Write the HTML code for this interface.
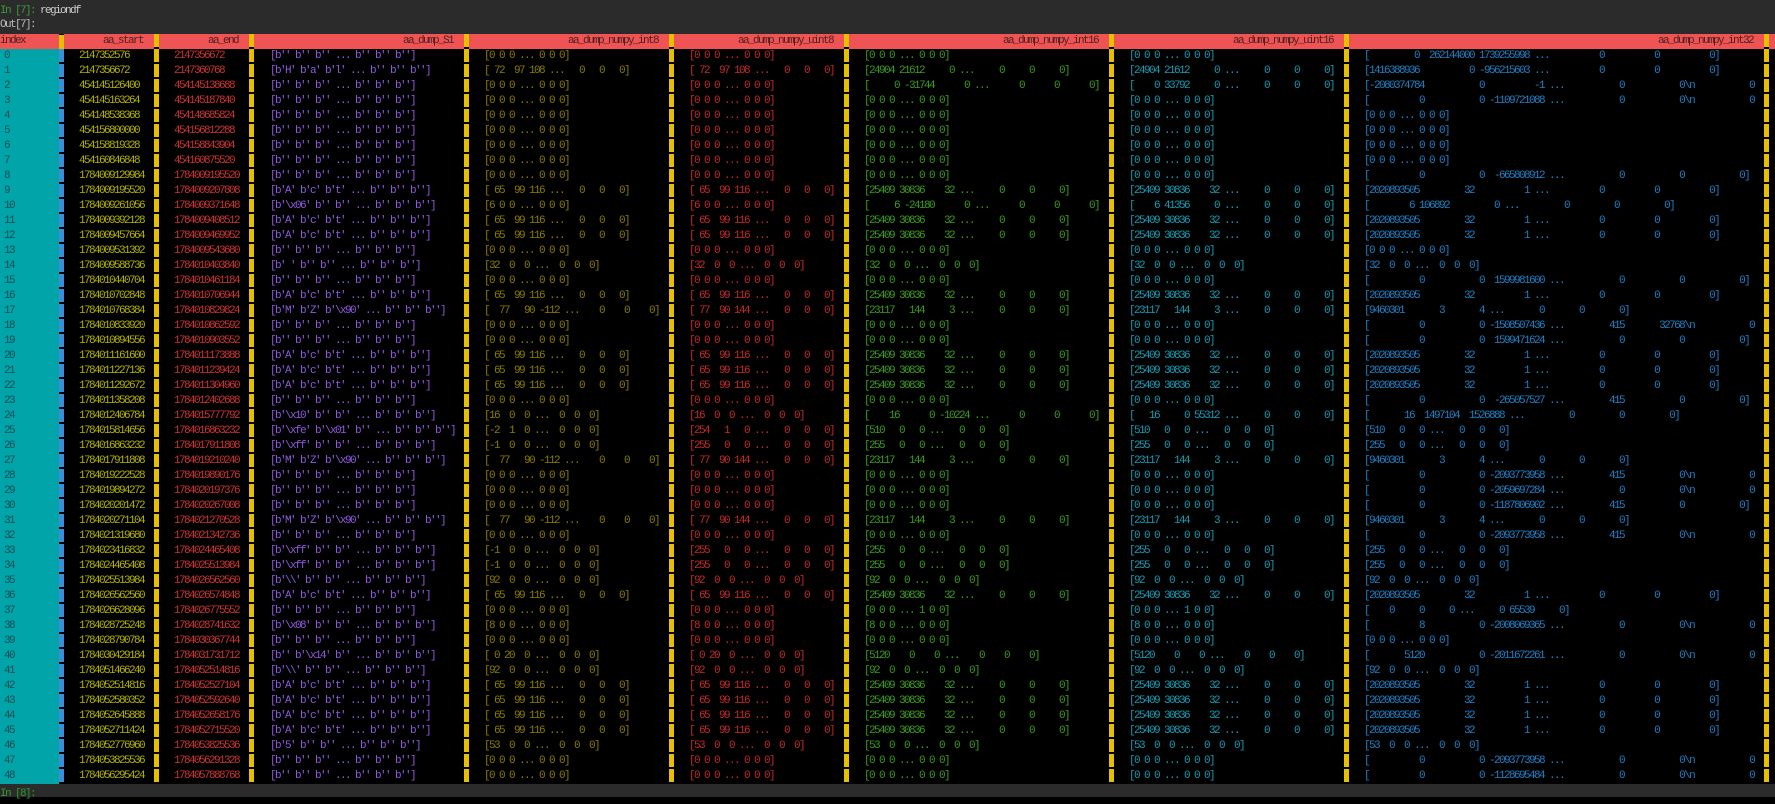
<!DOCTYPE html>
<html><head><meta charset="utf-8"><style>
html,body{margin:0;padding:0;background:#000;width:1775px;height:797px;overflow:hidden;font-family:"Liberation Mono",monospace;font-size:11px;letter-spacing:-1.6px}
.top{position:absolute;left:0;top:0;width:1775px;height:34px;background:#2b2b2b}
.bot{position:absolute;left:0;top:784px;width:1775px;height:13px;background:#2b2b2b;color:#2f9a2f;line-height:20px;padding-left:0}
.t1{position:absolute;left:0;top:5px;color:#3c9a3c}
.t1 b{font-weight:normal;color:#ccc}
.t2{position:absolute;left:0;top:19px;color:#bbb}
.hdr{position:absolute;left:0;top:34px;height:15px;width:1775px;background:#f05353;color:#4a2222;line-height:15px}
.hdr span{position:absolute;text-align:right;white-space:pre}
.idx{position:absolute;left:0;top:49px;width:59px;height:735px;background:#00a4a9}
.mk{position:absolute;top:34px;width:5px;height:750px;background:repeating-linear-gradient(to bottom,#e6c000 0 1px,#e6c000 1px 13px,#000 13px 15px)}
.mk.bl{top:49px;height:735px;background:repeating-linear-gradient(to bottom,#3a8fd8 0 13px,#000 13px 15px)}
.mk.h{top:34px;height:15px;background:#e6c000;border-top:1px solid #000;box-sizing:border-box}
.rows{position:absolute;left:0;top:49px;width:1775px}
.r{position:relative;height:15px;line-height:15px}
.r span{position:absolute;top:0;white-space:pre}
.r span:nth-child(1){left:4px;color:#0c4e52}
.r span:nth-child(2){left:79px;color:#b3b300}
.r span:nth-child(3){left:174px;color:#cc3434}
.r span:nth-child(4){left:270px;color:#8f5ae0}
.r span:nth-child(5){left:484px;color:#8a7c00}
.r span:nth-child(6){left:689px;color:#c42a2a}
.r span:nth-child(7){left:864px;color:#3c9c1c}
.r span:nth-child(8){left:1129px;color:#179cb4}
.r span:nth-child(9){left:1364px;color:#1f80c4}
</style></head><body>
<div class="top"><div class="t1">In [7]: <b>regiondf</b></div><div class="t2">Out[7]:</div></div>
<div class="hdr">
<span style="left:0">index</span>
<span style="right:1632px">aa_start</span>
<span style="right:1537px">aa_end</span>
<span style="right:1322px">aa_dump_S1</span>
<span style="right:1117px">aa_dump_numpy_int8</span>
<span style="right:942px">aa_dump_numpy_uint8</span>
<span style="right:677px">aa_dump_numpy_int16</span>
<span style="right:442px">aa_dump_numpy_uint16</span>
<span style="right:22px">aa_dump_numpy_int32</span>
</div>
<div class="idx"></div>
<div class="mk h" style="left:59px"></div>
<div class="mk bl" style="left:59px"></div>
<div class="mk" style="left:154px"></div>
<div class="mk" style="left:249px"></div>
<div class="mk" style="left:464px"></div>
<div class="mk" style="left:669px"></div>
<div class="mk" style="left:844px"></div>
<div class="mk" style="left:1109px"></div>
<div class="mk" style="left:1344px"></div>
<div class="mk" style="left:1764px"></div>
<div class="rows">
<div class="r"><span>0</span><span>2147352576</span><span>2147356672</span><span>[b'' b'' b'' ... b'' b'' b'']</span><span>[0 0 0 ... 0 0 0]</span><span>[0 0 0 ... 0 0 0]</span><span>[0 0 0 ... 0 0 0]</span><span>[0 0 0 ... 0 0 0]</span><span>[         0  262144000 1739255998 ...          0          0          0]</span></div>
<div class="r"><span>1</span><span>2147356672</span><span>2147360768</span><span>[b'H' b'a' b'l' ... b'' b'' b'']</span><span>[ 72  97 108 ...   0   0   0]</span><span>[ 72  97 108 ...   0   0   0]</span><span>[24904 21612     0 ...     0     0     0]</span><span>[24904 21612     0 ...     0     0     0]</span><span>[1416388936          0 -956215603 ...          0          0          0]</span></div>
<div class="r"><span>2</span><span>454145126400</span><span>454145138688</span><span>[b'' b'' b'' ... b'' b'' b'']</span><span>[0 0 0 ... 0 0 0]</span><span>[0 0 0 ... 0 0 0]</span><span>[     0 -31744      0 ...      0      0      0]</span><span>[    0 33792     0 ...     0     0     0]</span><span>[-2080374784           0          -1 ...           0           0\n           0</span></div>
<div class="r"><span>3</span><span>454145163264</span><span>454145187840</span><span>[b'' b'' b'' ... b'' b'' b'']</span><span>[0 0 0 ... 0 0 0]</span><span>[0 0 0 ... 0 0 0]</span><span>[0 0 0 ... 0 0 0]</span><span>[0 0 0 ... 0 0 0]</span><span>[          0           0 -1109721088 ...           0           0\n           0</span></div>
<div class="r"><span>4</span><span>454148538368</span><span>454148685824</span><span>[b'' b'' b'' ... b'' b'' b'']</span><span>[0 0 0 ... 0 0 0]</span><span>[0 0 0 ... 0 0 0]</span><span>[0 0 0 ... 0 0 0]</span><span>[0 0 0 ... 0 0 0]</span><span>[0 0 0 ... 0 0 0]</span></div>
<div class="r"><span>5</span><span>454156800000</span><span>454156812288</span><span>[b'' b'' b'' ... b'' b'' b'']</span><span>[0 0 0 ... 0 0 0]</span><span>[0 0 0 ... 0 0 0]</span><span>[0 0 0 ... 0 0 0]</span><span>[0 0 0 ... 0 0 0]</span><span>[0 0 0 ... 0 0 0]</span></div>
<div class="r"><span>6</span><span>454158819328</span><span>454158843904</span><span>[b'' b'' b'' ... b'' b'' b'']</span><span>[0 0 0 ... 0 0 0]</span><span>[0 0 0 ... 0 0 0]</span><span>[0 0 0 ... 0 0 0]</span><span>[0 0 0 ... 0 0 0]</span><span>[0 0 0 ... 0 0 0]</span></div>
<div class="r"><span>7</span><span>454160846848</span><span>454160875520</span><span>[b'' b'' b'' ... b'' b'' b'']</span><span>[0 0 0 ... 0 0 0]</span><span>[0 0 0 ... 0 0 0]</span><span>[0 0 0 ... 0 0 0]</span><span>[0 0 0 ... 0 0 0]</span><span>[0 0 0 ... 0 0 0]</span></div>
<div class="r"><span>8</span><span>1784009129984</span><span>1784009195520</span><span>[b'' b'' b'' ... b'' b'' b'']</span><span>[0 0 0 ... 0 0 0]</span><span>[0 0 0 ... 0 0 0]</span><span>[0 0 0 ... 0 0 0]</span><span>[0 0 0 ... 0 0 0]</span><span>[          0           0  -665808912 ...           0           0           0]</span></div>
<div class="r"><span>9</span><span>1784009195520</span><span>1784009207808</span><span>[b'A' b'c' b't' ... b'' b'' b'']</span><span>[ 65  99 116 ...   0   0   0]</span><span>[ 65  99 116 ...   0   0   0]</span><span>[25409 30836    32 ...     0     0     0]</span><span>[25409 30836    32 ...     0     0     0]</span><span>[2020893505         32          1 ...          0          0          0]</span></div>
<div class="r"><span>10</span><span>1784009261056</span><span>1784009371648</span><span>[b'\x06' b'' b'' ... b'' b'' b'']</span><span>[6 0 0 ... 0 0 0]</span><span>[6 0 0 ... 0 0 0]</span><span>[     6 -24180      0 ...      0      0      0]</span><span>[    6 41356     0 ...     0     0     0]</span><span>[        6 106892         0 ...         0         0         0]</span></div>
<div class="r"><span>11</span><span>1784009392128</span><span>1784009408512</span><span>[b'A' b'c' b't' ... b'' b'' b'']</span><span>[ 65  99 116 ...   0   0   0]</span><span>[ 65  99 116 ...   0   0   0]</span><span>[25409 30836    32 ...     0     0     0]</span><span>[25409 30836    32 ...     0     0     0]</span><span>[2020893505         32          1 ...          0          0          0]</span></div>
<div class="r"><span>12</span><span>1784009457664</span><span>1784009469952</span><span>[b'A' b'c' b't' ... b'' b'' b'']</span><span>[ 65  99 116 ...   0   0   0]</span><span>[ 65  99 116 ...   0   0   0]</span><span>[25409 30836    32 ...     0     0     0]</span><span>[25409 30836    32 ...     0     0     0]</span><span>[2020893505         32          1 ...          0          0          0]</span></div>
<div class="r"><span>13</span><span>1784009531392</span><span>1784009543680</span><span>[b'' b'' b'' ... b'' b'' b'']</span><span>[0 0 0 ... 0 0 0]</span><span>[0 0 0 ... 0 0 0]</span><span>[0 0 0 ... 0 0 0]</span><span>[0 0 0 ... 0 0 0]</span><span>[0 0 0 ... 0 0 0]</span></div>
<div class="r"><span>14</span><span>1784009588736</span><span>1784010403840</span><span>[b' ' b'' b'' ... b'' b'' b'']</span><span>[32  0  0 ...  0  0  0]</span><span>[32  0  0 ...  0  0  0]</span><span>[32  0  0 ...  0  0  0]</span><span>[32  0  0 ...  0  0  0]</span><span>[32  0  0 ...  0  0  0]</span></div>
<div class="r"><span>15</span><span>1784010440704</span><span>1784010461184</span><span>[b'' b'' b'' ... b'' b'' b'']</span><span>[0 0 0 ... 0 0 0]</span><span>[0 0 0 ... 0 0 0]</span><span>[0 0 0 ... 0 0 0]</span><span>[0 0 0 ... 0 0 0]</span><span>[          0           0  1599981600 ...           0           0           0]</span></div>
<div class="r"><span>16</span><span>1784010702848</span><span>1784010706944</span><span>[b'A' b'c' b't' ... b'' b'' b'']</span><span>[ 65  99 116 ...   0   0   0]</span><span>[ 65  99 116 ...   0   0   0]</span><span>[25409 30836    32 ...     0     0     0]</span><span>[25409 30836    32 ...     0     0     0]</span><span>[2020893505         32          1 ...          0          0          0]</span></div>
<div class="r"><span>17</span><span>1784010768384</span><span>1784010829824</span><span>[b'M' b'Z' b'\x90' ... b'' b'' b'']</span><span>[  77   90 -112 ...    0    0    0]</span><span>[ 77  90 144 ...   0   0   0]</span><span>[23117   144     3 ...     0     0     0]</span><span>[23117   144     3 ...     0     0     0]</span><span>[9460301       3       4 ...       0       0       0]</span></div>
<div class="r"><span>18</span><span>1784010833920</span><span>1784010862592</span><span>[b'' b'' b'' ... b'' b'' b'']</span><span>[0 0 0 ... 0 0 0]</span><span>[0 0 0 ... 0 0 0]</span><span>[0 0 0 ... 0 0 0]</span><span>[0 0 0 ... 0 0 0]</span><span>[          0           0 -1508507436 ...         415       32768\n           0</span></div>
<div class="r"><span>19</span><span>1784010894556</span><span>1784010903552</span><span>[b'' b'' b'' ... b'' b'' b'']</span><span>[0 0 0 ... 0 0 0]</span><span>[0 0 0 ... 0 0 0]</span><span>[0 0 0 ... 0 0 0]</span><span>[0 0 0 ... 0 0 0]</span><span>[          0           0  1599471624 ...           0           0           0]</span></div>
<div class="r"><span>20</span><span>1784011161600</span><span>1784011173888</span><span>[b'A' b'c' b't' ... b'' b'' b'']</span><span>[ 65  99 116 ...   0   0   0]</span><span>[ 65  99 116 ...   0   0   0]</span><span>[25409 30836    32 ...     0     0     0]</span><span>[25409 30836    32 ...     0     0     0]</span><span>[2020893505         32          1 ...          0          0          0]</span></div>
<div class="r"><span>21</span><span>1784011227136</span><span>1784011239424</span><span>[b'A' b'c' b't' ... b'' b'' b'']</span><span>[ 65  99 116 ...   0   0   0]</span><span>[ 65  99 116 ...   0   0   0]</span><span>[25409 30836    32 ...     0     0     0]</span><span>[25409 30836    32 ...     0     0     0]</span><span>[2020893505         32          1 ...          0          0          0]</span></div>
<div class="r"><span>22</span><span>1784011292672</span><span>1784011304960</span><span>[b'A' b'c' b't' ... b'' b'' b'']</span><span>[ 65  99 116 ...   0   0   0]</span><span>[ 65  99 116 ...   0   0   0]</span><span>[25409 30836    32 ...     0     0     0]</span><span>[25409 30836    32 ...     0     0     0]</span><span>[2020893505         32          1 ...          0          0          0]</span></div>
<div class="r"><span>23</span><span>1784011358208</span><span>1784012402688</span><span>[b'' b'' b'' ... b'' b'' b'']</span><span>[0 0 0 ... 0 0 0]</span><span>[0 0 0 ... 0 0 0]</span><span>[0 0 0 ... 0 0 0]</span><span>[0 0 0 ... 0 0 0]</span><span>[          0           0  -265057527 ...         415           0           0]</span></div>
<div class="r"><span>24</span><span>1784012406784</span><span>1784015777792</span><span>[b'\x10' b'' b'' ... b'' b'' b'']</span><span>[16  0  0 ...  0  0  0]</span><span>[16  0  0 ...  0  0  0]</span><span>[    16      0 -10224 ...      0      0      0]</span><span>[   16     0 55312 ...     0     0     0]</span><span>[       16  1497104  1526888 ...         0         0         0]</span></div>
<div class="r"><span>25</span><span>1784015814656</span><span>1784016863232</span><span>[b'\xfe' b'\x01' b'' ... b'' b'' b'']</span><span>[-2  1  0 ...  0  0  0]</span><span>[254   1   0 ...   0   0   0]</span><span>[510   0   0 ...   0   0   0]</span><span>[510   0   0 ...   0   0   0]</span><span>[510   0   0 ...   0   0   0]</span></div>
<div class="r"><span>26</span><span>1784016863232</span><span>1784017911808</span><span>[b'\xff' b'' b'' ... b'' b'' b'']</span><span>[-1  0  0 ...  0  0  0]</span><span>[255   0   0 ...   0   0   0]</span><span>[255   0   0 ...   0   0   0]</span><span>[255   0   0 ...   0   0   0]</span><span>[255   0   0 ...   0   0   0]</span></div>
<div class="r"><span>27</span><span>1784017911808</span><span>1784019210240</span><span>[b'M' b'Z' b'\x90' ... b'' b'' b'']</span><span>[  77   90 -112 ...    0    0    0]</span><span>[ 77  90 144 ...   0   0   0]</span><span>[23117   144     3 ...     0     0     0]</span><span>[23117   144     3 ...     0     0     0]</span><span>[9460301       3       4 ...       0       0       0]</span></div>
<div class="r"><span>28</span><span>1784019222528</span><span>1784019890176</span><span>[b'' b'' b'' ... b'' b'' b'']</span><span>[0 0 0 ... 0 0 0]</span><span>[0 0 0 ... 0 0 0]</span><span>[0 0 0 ... 0 0 0]</span><span>[0 0 0 ... 0 0 0]</span><span>[          0           0 -2093773958 ...         415           0\n           0</span></div>
<div class="r"><span>29</span><span>1784019894272</span><span>1784020197376</span><span>[b'' b'' b'' ... b'' b'' b'']</span><span>[0 0 0 ... 0 0 0]</span><span>[0 0 0 ... 0 0 0]</span><span>[0 0 0 ... 0 0 0]</span><span>[0 0 0 ... 0 0 0]</span><span>[          0           0 -2059697284 ...           0           0\n           0</span></div>
<div class="r"><span>30</span><span>1784020201472</span><span>1784020267008</span><span>[b'' b'' b'' ... b'' b'' b'']</span><span>[0 0 0 ... 0 0 0]</span><span>[0 0 0 ... 0 0 0]</span><span>[0 0 0 ... 0 0 0]</span><span>[0 0 0 ... 0 0 0]</span><span>[          0           0 -1187806902 ...         415           0           0]</span></div>
<div class="r"><span>31</span><span>1784020271104</span><span>1784021270528</span><span>[b'M' b'Z' b'\x90' ... b'' b'' b'']</span><span>[  77   90 -112 ...    0    0    0]</span><span>[ 77  90 144 ...   0   0   0]</span><span>[23117   144     3 ...     0     0     0]</span><span>[23117   144     3 ...     0     0     0]</span><span>[9460301       3       4 ...       0       0       0]</span></div>
<div class="r"><span>32</span><span>1784021319680</span><span>1784021342736</span><span>[b'' b'' b'' ... b'' b'' b'']</span><span>[0 0 0 ... 0 0 0]</span><span>[0 0 0 ... 0 0 0]</span><span>[0 0 0 ... 0 0 0]</span><span>[0 0 0 ... 0 0 0]</span><span>[          0           0 -2093773958 ...         415           0\n           0</span></div>
<div class="r"><span>33</span><span>1784023416832</span><span>1784024465408</span><span>[b'\xff' b'' b'' ... b'' b'' b'']</span><span>[-1  0  0 ...  0  0  0]</span><span>[255   0   0 ...   0   0   0]</span><span>[255   0   0 ...   0   0   0]</span><span>[255   0   0 ...   0   0   0]</span><span>[255   0   0 ...   0   0   0]</span></div>
<div class="r"><span>34</span><span>1784024465408</span><span>1784025513984</span><span>[b'\xff' b'' b'' ... b'' b'' b'']</span><span>[-1  0  0 ...  0  0  0]</span><span>[255   0   0 ...   0   0   0]</span><span>[255   0   0 ...   0   0   0]</span><span>[255   0   0 ...   0   0   0]</span><span>[255   0   0 ...   0   0   0]</span></div>
<div class="r"><span>35</span><span>1784025513984</span><span>1784026562560</span><span>[b'\\' b'' b'' ... b'' b'' b'']</span><span>[92  0  0 ...  0  0  0]</span><span>[92  0  0 ...  0  0  0]</span><span>[92  0  0 ...  0  0  0]</span><span>[92  0  0 ...  0  0  0]</span><span>[92  0  0 ...  0  0  0]</span></div>
<div class="r"><span>36</span><span>1784026562560</span><span>1784026574848</span><span>[b'A' b'c' b't' ... b'' b'' b'']</span><span>[ 65  99 116 ...   0   0   0]</span><span>[ 65  99 116 ...   0   0   0]</span><span>[25409 30836    32 ...     0     0     0]</span><span>[25409 30836    32 ...     0     0     0]</span><span>[2020893505         32          1 ...          0          0          0]</span></div>
<div class="r"><span>37</span><span>1784026628096</span><span>1784026775552</span><span>[b'' b'' b'' ... b'' b'' b'']</span><span>[0 0 0 ... 0 0 0]</span><span>[0 0 0 ... 0 0 0]</span><span>[0 0 0 ... 1 0 0]</span><span>[0 0 0 ... 1 0 0]</span><span>[    0     0     0 ...     0 65539     0]</span></div>
<div class="r"><span>38</span><span>1784028725248</span><span>1784028741632</span><span>[b'\x08' b'' b'' ... b'' b'' b'']</span><span>[8 0 0 ... 0 0 0]</span><span>[8 0 0 ... 0 0 0]</span><span>[8 0 0 ... 0 0 0]</span><span>[8 0 0 ... 0 0 0]</span><span>[          8           0 -2008069365 ...           0           0\n           0</span></div>
<div class="r"><span>39</span><span>1784028790784</span><span>1784030367744</span><span>[b'' b'' b'' ... b'' b'' b'']</span><span>[0 0 0 ... 0 0 0]</span><span>[0 0 0 ... 0 0 0]</span><span>[0 0 0 ... 0 0 0]</span><span>[0 0 0 ... 0 0 0]</span><span>[0 0 0 ... 0 0 0]</span></div>
<div class="r"><span>40</span><span>1784030429184</span><span>1784031731712</span><span>[b'' b'\x14' b'' ... b'' b'' b'']</span><span>[ 0 20  0 ...  0  0  0]</span><span>[ 0 20  0 ...  0  0  0]</span><span>[5120    0    0 ...    0    0    0]</span><span>[5120    0    0 ...    0    0    0]</span><span>[       5120           0 -2011672261 ...           0           0\n           0</span></div>
<div class="r"><span>41</span><span>1784051466240</span><span>1784052514816</span><span>[b'\\' b'' b'' ... b'' b'' b'']</span><span>[92  0  0 ...  0  0  0]</span><span>[92  0  0 ...  0  0  0]</span><span>[92  0  0 ...  0  0  0]</span><span>[92  0  0 ...  0  0  0]</span><span>[92  0  0 ...  0  0  0]</span></div>
<div class="r"><span>42</span><span>1784052514816</span><span>1784052527104</span><span>[b'A' b'c' b't' ... b'' b'' b'']</span><span>[ 65  99 116 ...   0   0   0]</span><span>[ 65  99 116 ...   0   0   0]</span><span>[25409 30836    32 ...     0     0     0]</span><span>[25409 30836    32 ...     0     0     0]</span><span>[2020893505         32          1 ...          0          0          0]</span></div>
<div class="r"><span>43</span><span>1784052580352</span><span>1784052592640</span><span>[b'A' b'c' b't' ... b'' b'' b'']</span><span>[ 65  99 116 ...   0   0   0]</span><span>[ 65  99 116 ...   0   0   0]</span><span>[25409 30836    32 ...     0     0     0]</span><span>[25409 30836    32 ...     0     0     0]</span><span>[2020893505         32          1 ...          0          0          0]</span></div>
<div class="r"><span>44</span><span>1784052645888</span><span>1784052658176</span><span>[b'A' b'c' b't' ... b'' b'' b'']</span><span>[ 65  99 116 ...   0   0   0]</span><span>[ 65  99 116 ...   0   0   0]</span><span>[25409 30836    32 ...     0     0     0]</span><span>[25409 30836    32 ...     0     0     0]</span><span>[2020893505         32          1 ...          0          0          0]</span></div>
<div class="r"><span>45</span><span>1784052711424</span><span>1784052715520</span><span>[b'A' b'c' b't' ... b'' b'' b'']</span><span>[ 65  99 116 ...   0   0   0]</span><span>[ 65  99 116 ...   0   0   0]</span><span>[25409 30836    32 ...     0     0     0]</span><span>[25409 30836    32 ...     0     0     0]</span><span>[2020893505         32          1 ...          0          0          0]</span></div>
<div class="r"><span>46</span><span>1784052776960</span><span>1784053825536</span><span>[b'5' b'' b'' ... b'' b'' b'']</span><span>[53  0  0 ...  0  0  0]</span><span>[53  0  0 ...  0  0  0]</span><span>[53  0  0 ...  0  0  0]</span><span>[53  0  0 ...  0  0  0]</span><span>[53  0  0 ...  0  0  0]</span></div>
<div class="r"><span>47</span><span>1784053825536</span><span>1784056291328</span><span>[b'' b'' b'' ... b'' b'' b'']</span><span>[0 0 0 ... 0 0 0]</span><span>[0 0 0 ... 0 0 0]</span><span>[0 0 0 ... 0 0 0]</span><span>[0 0 0 ... 0 0 0]</span><span>[          0           0 -2093773958 ...           0           0\n           0</span></div>
<div class="r"><span>48</span><span>1784056295424</span><span>1784057888768</span><span>[b'' b'' b'' ... b'' b'' b'']</span><span>[0 0 0 ... 0 0 0]</span><span>[0 0 0 ... 0 0 0]</span><span>[0 0 0 ... 0 0 0]</span><span>[0 0 0 ... 0 0 0]</span><span>[          0           0 -1128695484 ...           0           0\n           0</span></div>
</div>
<div class="bot">In [8]:</div>
</body></html>
